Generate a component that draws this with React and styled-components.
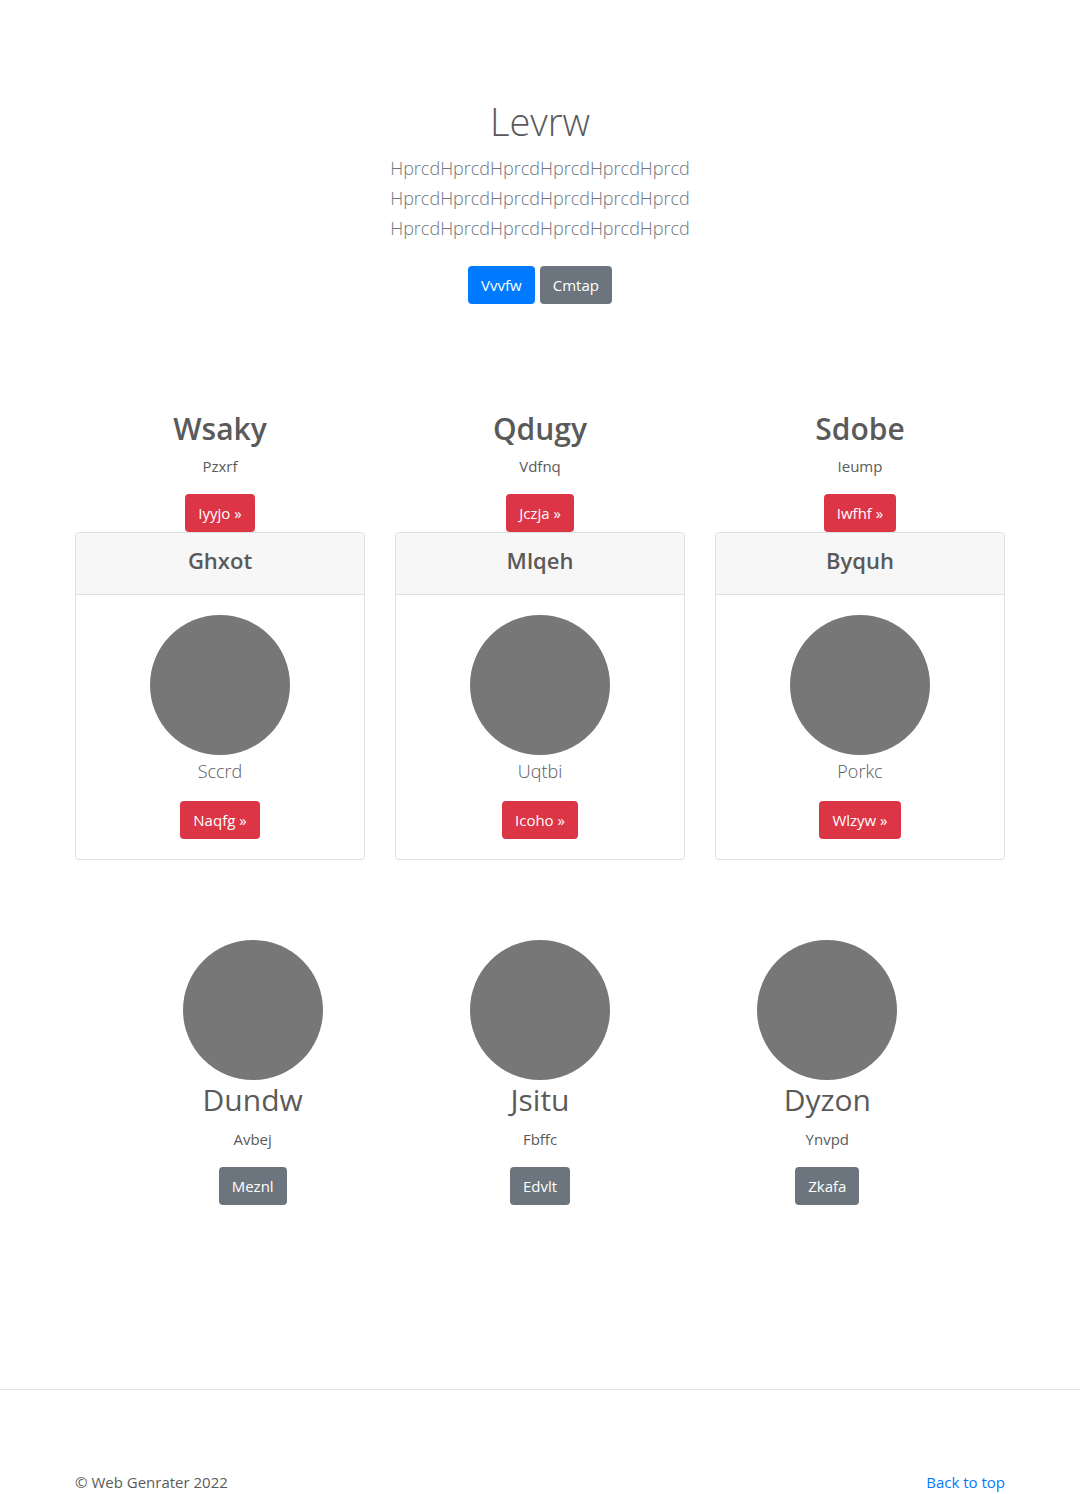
import React from 'react';
import styled, { createGlobalStyle } from 'styled-components';

const GlobalStyle = createGlobalStyle`
  *, *::before, *::after { box-sizing: border-box; }
  body {
    margin: 0;
    background: #fff;
    color: #5a5a5a;
    font-family: 'Open Sans', 'Noto Sans', sans-serif;
    font-size: 15px;
    line-height: 24px;
  }
  h1, h2, h3, p { margin: 0; }
`;

const Container = styled.div`
  width: 100%;
  max-width: 960px;
  margin: 0 auto;
  padding: 0 15px;
`;

const Hero = styled.header`
  display: flex;
  flex-direction: column;
  align-items: center;
  padding: 96px 15px 104px;
  text-align: center;
`;

const HeroTitle = styled.h1`
  margin-bottom: 7px;
  font-size: 38px;
  font-weight: 300;
  line-height: 50px;
`;

const Lead = styled.p`
  color: ${(p) => (p.$muted ? '#6c757d' : 'inherit')};
  font-size: 18px;
  font-weight: 300;
  line-height: 30px;
`;

const ButtonRow = styled.div`
  display: flex;
  gap: 5px;
  margin-top: 23px;
`;

const buttonColors = { primary: '#007bff', secondary: '#6c757d', danger: '#dc3545' };

const Button = styled.button`
  padding: 7px 13px;
  border: 0;
  border-radius: 4px;
  background: ${(p) => buttonColors[p.$tone]};
  color: #fff;
  font: inherit;
  cursor: pointer;
`;

const Columns = styled.section`
  display: grid;
  grid-template-columns: repeat(3, minmax(0, 1fr));
  column-gap: ${(p) => (p.$inset ? '0' : '30px')};
  padding: ${(p) => (p.$inset ? '80px 34px 184px' : '0')};
`;

const Column = styled.div`
  display: flex;
  flex-direction: column;
  align-items: center;
  text-align: center;
`;

const Heading = styled.h2`
  margin-bottom: ${(p) => (p.$strong ? '4px' : '7px')};
  font-size: 30px;
  font-weight: ${(p) => (p.$strong ? 600 : 400)};
  line-height: ${(p) => (p.$strong ? '42px' : '40px')};
`;

const Text = styled.p`
  margin-bottom: 16px;
`;

const Card = styled.article`
  align-self: stretch;
  border: 1px solid #dfdfdf;
  border-radius: 4px;
  overflow: hidden;
`;

const CardHeader = styled.div`
  padding: 12px 20px 18px;
  border-bottom: 1px solid #dfdfdf;
  background: #f7f7f7;
`;

const CardTitle = styled.h3`
  font-size: 22px;
  font-weight: 600;
  line-height: 31px;
`;

const CardBody = styled.div`
  display: flex;
  flex-direction: column;
  align-items: center;
  padding: 20px;
`;

const CardText = styled(Lead)`
  margin: 1px 0 15px;
`;

const Circle = styled.div`
  width: 140px;
  height: 140px;
  border-radius: 50%;
  background: #777;
`;

const Footer = styled.footer`
  padding-top: 80px;
  border-top: 1px solid #e5e5e5;
`;

const FooterRow = styled(Container)`
  display: flex;
  justify-content: space-between;
`;

const TopLink = styled.a`
  color: #007bff;
  text-decoration: none;
`;

const plans = [
  { title: 'Wsaky', text: 'Pzxrf', action: 'Iyyjo »', card: 'Ghxot', lead: 'Sccrd', cardAction: 'Naqfg »' },
  { title: 'Qdugy', text: 'Vdfnq', action: 'Jczja »', card: 'Mlqeh', lead: 'Uqtbi', cardAction: 'Icoho »' },
  { title: 'Sdobe', text: 'Ieump', action: 'Iwfhf »', card: 'Byquh', lead: 'Porkc', cardAction: 'Wlzyw »' },
];

const features = [
  { title: 'Dundw', text: 'Avbej', action: 'Meznl' },
  { title: 'Jsitu', text: 'Fbffc', action: 'Edvlt' },
  { title: 'Dyzon', text: 'Ynvpd', action: 'Zkafa' },
];

const heroLines = Array(3).fill('Hprcd'.repeat(6));

export default function App() {
  return (
    <>
      <GlobalStyle />
      <Hero id="top">
        <HeroTitle>Levrw</HeroTitle>
        {heroLines.map((line, i) => (
          <Lead key={i} $muted>{line}</Lead>
        ))}
        <ButtonRow>
          <Button type="button" $tone="primary">Vvvfw</Button>
          <Button type="button" $tone="secondary">Cmtap</Button>
        </ButtonRow>
      </Hero>
      <Container as="main">
        <Columns>
          {plans.map((plan) => (
            <Column key={plan.title}>
              <Heading $strong>{plan.title}</Heading>
              <Text>{plan.text}</Text>
              <Button type="button" $tone="danger">{plan.action}</Button>
              <Card>
                <CardHeader>
                  <CardTitle>{plan.card}</CardTitle>
                </CardHeader>
                <CardBody>
                  <Circle />
                  <CardText>{plan.lead}</CardText>
                  <Button type="button" $tone="danger">{plan.cardAction}</Button>
                </CardBody>
              </Card>
            </Column>
          ))}
        </Columns>
        <Columns $inset>
          {features.map((feature) => (
            <Column key={feature.title}>
              <Circle />
              <Heading>{feature.title}</Heading>
              <Text>{feature.text}</Text>
              <Button type="button" $tone="secondary">{feature.action}</Button>
            </Column>
          ))}
        </Columns>
      </Container>
      <Footer>
        <FooterRow>
          <p>© Web Genrater 2022</p>
          <TopLink href="#top">Back to top</TopLink>
        </FooterRow>
      </Footer>
    </>
  );
}
